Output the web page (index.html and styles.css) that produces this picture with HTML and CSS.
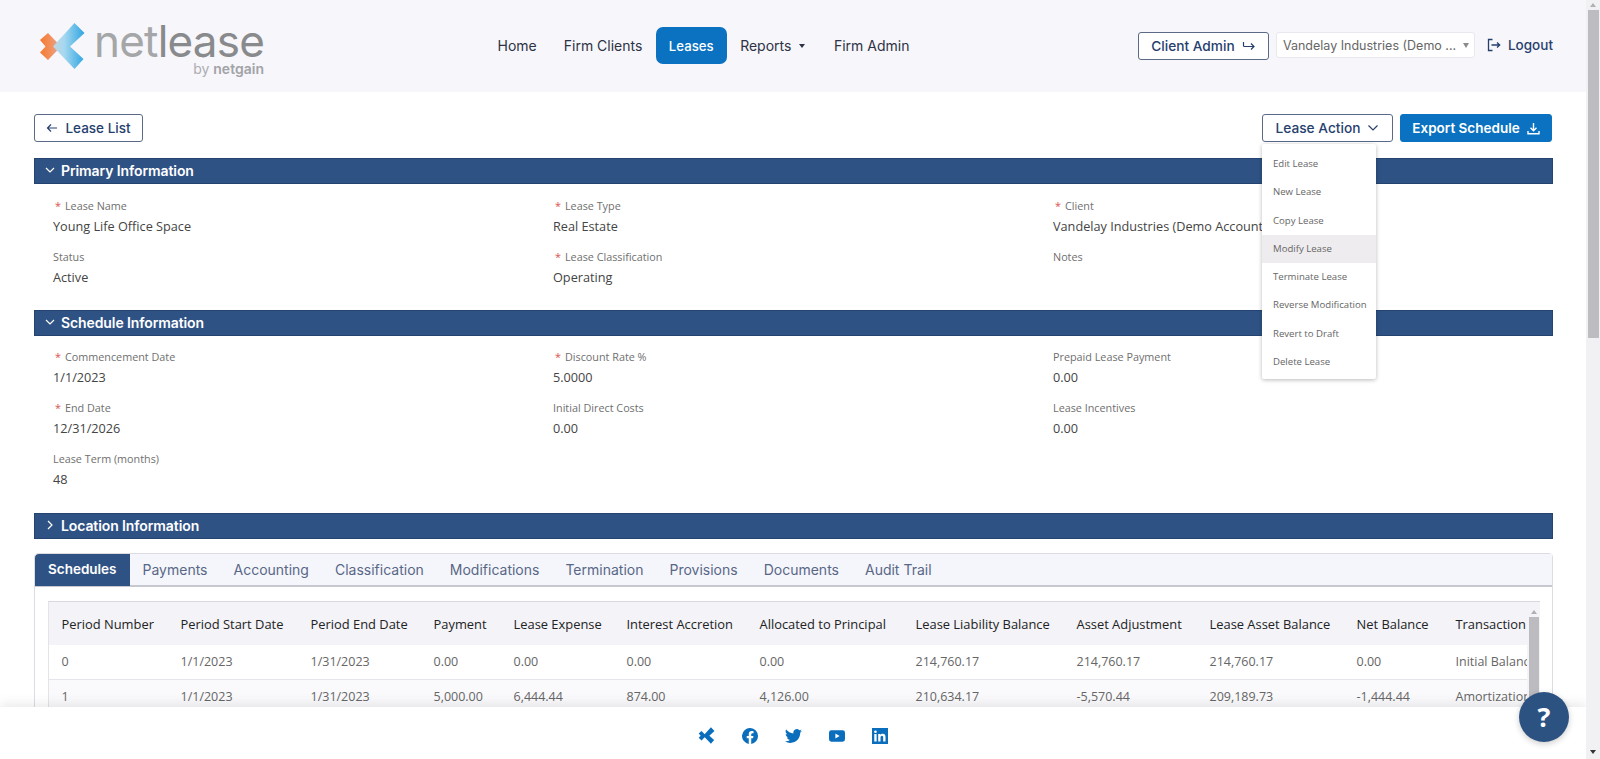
FILE: index.html
```html
<!DOCTYPE html>
<html lang="en">
<head>
<meta charset="utf-8">
<title>Netlease</title>
<link rel="stylesheet" href="styles.css">
</head>
<body>
<div class="app">
  <div class="page">
    <header class="header">
      <a class="logo">
        <svg class="logo-mark" width="46" height="48" viewBox="38 20 46 48">
          <defs>
            <linearGradient id="gb" x1="0" y1="0" x2="1" y2="0"><stop offset="0" stop-color="#c3d6e0"/><stop offset="0.35" stop-color="#a6d8f0"/><stop offset="1" stop-color="#2fa5e2"/></linearGradient>
            <linearGradient id="go" x1="0" y1="0" x2="1" y2="0"><stop offset="0" stop-color="#f47a30"/><stop offset="0.6" stop-color="#f29466"/><stop offset="1" stop-color="#b9b5b0"/></linearGradient>
          </defs>
          <polygon fill="url(#go)" points="39,38 47,31 60,44.5 47,58 39,50.5 44.5,44.5"/>
          <polygon fill="url(#gb)" points="73.5,21 83.5,31 69,44.5 82.5,57 73.5,67 52,44.5"/>
        </svg>
        <span class="logo-text">
          <span class="logo-word"><span class="logo-net">net</span>lease</span>
          <span class="logo-by">by <b>netgain</b></span>
        </span>
      </a>
      <nav class="nav">
        <a class="nav-item">Home</a>
        <a class="nav-item">Firm Clients</a>
        <a class="nav-item nav-active">Leases</a>
        <a class="nav-item nav-reports">Reports<span class="nav-caret"></span></a>
        <a class="nav-item">Firm Admin</a>
      </nav>
      <div class="header-right">
        <button class="btn btn-client">Client Admin
          <svg width="14" height="14" viewBox="0 0 14 14" fill="none" stroke="#26406e" stroke-width="1.2"><path d="M1.5 3v3.5q0 1 1 1h9.5M9 4.5l3 3-3 3"/></svg>
        </button>
        <div class="select"><span class="select-text">Vandelay Industries (Demo ...</span><span class="select-caret"></span></div>
        <a class="logout">
          <svg width="14" height="14" viewBox="0 0 14 14" fill="none" stroke="#26406e" stroke-width="1.3"><path d="M5.5 1.5h-4v11h4M4.5 7h8M10 4.5l2.7 2.5-2.7 2.5"/></svg>
          Logout
        </a>
      </div>
    </header>

    <main class="content">
      <div class="toolbar">
        <button class="btn btn-back">
          <svg width="12" height="12" viewBox="0 0 12 12" fill="none" stroke="#26406e" stroke-width="1.2"><path d="M11 6H1.5M5 2.5L1.5 6 5 9.5"/></svg>
          Lease List
        </button>
        <div class="toolbar-right">
          <div class="action-wrap">
            <button class="btn btn-action">Lease Action
              <svg width="12" height="8" viewBox="0 0 12 8" fill="none" stroke="#26406e" stroke-width="1.2"><path d="M1.5 1.5L6 6l4.5-4.5"/></svg>
            </button>
            <ul class="menu">
              <li class="menu-item">Edit Lease</li>
              <li class="menu-item">New Lease</li>
              <li class="menu-item">Copy Lease</li>
              <li class="menu-item menu-hover">Modify Lease</li>
              <li class="menu-item">Terminate Lease</li>
              <li class="menu-item">Reverse Modification</li>
              <li class="menu-item">Revert to Draft</li>
              <li class="menu-item">Delete Lease</li>
            </ul>
          </div>
          <button class="btn btn-export">Export Schedule
            <svg width="13" height="13" viewBox="0 0 13 13" fill="none" stroke="#fff" stroke-width="1.4"><path d="M6.5 1v7.5M3.5 5.8l3 3 3-3M1 9v2.8h11V9"/></svg>
          </button>
        </div>
      </div>

      <section class="section">
        <h2 class="bar"><svg class="bar-chev" width="10" height="7" viewBox="0 0 10 7" fill="none" stroke="#fff" stroke-width="1.2"><path d="M1 1l4 4 4-4"/></svg>Primary Information</h2>
        <div class="fields">
          <div class="field"><div class="label"><span class="req">*</span>Lease Name</div><div class="value">Young Life Office Space</div></div>
          <div class="field"><div class="label"><span class="req">*</span>Lease Type</div><div class="value">Real Estate</div></div>
          <div class="field"><div class="label"><span class="req">*</span>Client</div><div class="value">Vandelay Industries (Demo Account)</div></div>
          <div class="field"><div class="label">Status</div><div class="value">Active</div></div>
          <div class="field"><div class="label"><span class="req">*</span>Lease Classification</div><div class="value">Operating</div></div>
          <div class="field"><div class="label">Notes</div><div class="value"></div></div>
        </div>
      </section>

      <section class="section section-schedule">
        <h2 class="bar"><svg class="bar-chev" width="10" height="7" viewBox="0 0 10 7" fill="none" stroke="#fff" stroke-width="1.2"><path d="M1 1l4 4 4-4"/></svg>Schedule Information</h2>
        <div class="fields">
          <div class="field"><div class="label"><span class="req">*</span>Commencement Date</div><div class="value">1/1/2023</div></div>
          <div class="field"><div class="label"><span class="req">*</span>Discount Rate %</div><div class="value">5.0000</div></div>
          <div class="field"><div class="label">Prepaid Lease Payment</div><div class="value">0.00</div></div>
          <div class="field"><div class="label"><span class="req">*</span>End Date</div><div class="value">12/31/2026</div></div>
          <div class="field"><div class="label">Initial Direct Costs</div><div class="value">0.00</div></div>
          <div class="field"><div class="label">Lease Incentives</div><div class="value">0.00</div></div>
          <div class="field"><div class="label">Lease Term (months)</div><div class="value">48</div></div>
        </div>
      </section>

      <section class="section section-closed">
        <h2 class="bar"><svg class="bar-chev" width="10" height="10" viewBox="0 0 10 10" fill="none" stroke="#fff" stroke-width="1.2"><path d="M3 1l4 4-4 4"/></svg>Location Information</h2>
      </section>

      <section class="card">
        <div class="tabs">
          <a class="tab tab-active">Schedules</a>
          <a class="tab">Payments</a>
          <a class="tab">Accounting</a>
          <a class="tab">Classification</a>
          <a class="tab">Modifications</a>
          <a class="tab">Termination</a>
          <a class="tab">Provisions</a>
          <a class="tab">Documents</a>
          <a class="tab">Audit Trail</a>
        </div>
        <div class="table-box">
          <div class="table-scroll">
            <table class="table">
              <colgroup>
                <col class="c1"><col class="c2"><col class="c3"><col class="c4"><col class="c5"><col class="c6"><col class="c7"><col class="c8"><col class="c9"><col class="c10"><col class="c11"><col class="c12">
              </colgroup>
              <thead>
                <tr><th>Period Number</th><th>Period Start Date</th><th>Period End Date</th><th>Payment</th><th>Lease Expense</th><th>Interest Accretion</th><th>Allocated to Principal</th><th>Lease Liability Balance</th><th>Asset Adjustment</th><th>Lease Asset Balance</th><th>Net Balance</th><th>Transaction Type</th></tr>
              </thead>
              <tbody>
                <tr><td>0</td><td>1/1/2023</td><td>1/31/2023</td><td>0.00</td><td>0.00</td><td>0.00</td><td>0.00</td><td>214,760.17</td><td>214,760.17</td><td>214,760.17</td><td>0.00</td><td>Initial Balance</td></tr>
                <tr class="row-alt"><td>1</td><td>1/1/2023</td><td>1/31/2023</td><td>5,000.00</td><td>6,444.44</td><td>874.00</td><td>4,126.00</td><td>210,634.17</td><td>-5,570.44</td><td>209,189.73</td><td>-1,444.44</td><td>Amortization</td></tr>
              </tbody>
            </table>
          </div>
          <div class="inner-scroll"><span class="arrow-up"></span><div class="inner-thumb"></div></div>
        </div>
      </section>
    </main>

    <footer class="footer">
      <svg width="17" height="17" viewBox="38 20 46 48" fill="#0a6ebd"><polygon points="39,38 47,31 60,44.5 47,58 39,50.5 44.5,44.5"/><polygon points="73.5,21 83.5,31 69,44.5 82.5,57 73.5,67 52,44.5"/></svg>
      <svg width="16" height="16" viewBox="0 0 16 16" fill="#0a6ebd"><path d="M16 8a8 8 0 1 0-9.25 7.9v-5.6H4.7V8h2.05V6.2c0-2 1.2-3.1 3-3.1.87 0 1.78.15 1.78.15v2h-1c-1 0-1.3.6-1.3 1.25V8h2.2l-.35 2.3H9.23v5.6A8 8 0 0 0 16 8z"/></svg>
      <svg width="17" height="14" viewBox="0 0 17 14" fill="#0a6ebd"><path d="M17 1.7c-.6.3-1.3.5-2 .6.7-.4 1.3-1.1 1.5-1.9-.7.4-1.4.7-2.2.8A3.5 3.5 0 0 0 8.400 4.400 10 10 0 0 1 1.200.6a3.500 3.500 0 0 0 1.100 4.700c-.6 0-1.100-.2-1.600-.4 0 1.700 1.200 3.100 2.800 3.400-.5.1-1 .2-1.600.1.500 1.400 1.700 2.400 3.300 2.400A7 7 0 0 1 0 12.300 10 10 0 0 0 5.300 13.900c6.500 0 10.100-5.400 9.900-10.200.7-.5 1.300-1.200 1.800-2z"/></svg>
      <svg width="16" height="12" viewBox="0 0 17 12" fill="#0a6ebd"><path fill-rule="evenodd" d="M2.500 0h12A2.500 2.500 0 0 1 17 2.500v7a2.500 2.500 0 0 1-2.500 2.500h-12A2.500 2.500 0 0 1 0 9.500v-7A2.500 2.500 0 0 1 2.500 0zM6.800 3.400v5.200L11.300 6z"/></svg>
      <svg width="16" height="16" viewBox="0 0 16 16"><rect width="16" height="16" fill="#0a6ebd"/><path fill="#fff" d="M2.300 6h2.300v7.600H2.300zM3.450 2.400a1.300 1.300 0 1 1 0 2.700 1.300 1.300 0 0 1 0-2.700zM6.200 6h2.200v1c.4-.7 1.200-1.200 2.300-1.200 2.300 0 2.800 1.500 2.800 3.500v4.300h-2.300V9.800c0-.9 0-2-1.200-2s-1.500 1-1.500 2v3.800H6.200z"/></svg>
    </footer>
  </div>

  <aside class="scrollbar"><span class="arrow-up"></span><div class="scroll-thumb"></div><span class="arrow-down"></span></aside>
  <button class="help">?</button>
</div>
</body>
</html>
```

FILE: styles.css
```css
* { box-sizing: border-box; }
html, body { margin: 0; height: 100%; overflow: hidden; background: #fff; }
body { font-family: "Open Sans", "Noto Sans", sans-serif; font-size: 13px; color: #333; }
button { font: inherit; cursor: pointer; }
ul { margin: 0; padding: 0; list-style: none; }
h2 { margin: 0; }

.app { position: relative; display: flex; height: 759px; overflow: hidden; }
.page { flex: 1; min-width: 0; display: flex; flex-direction: column; }

/* Header */
.header { flex: none; height: 92px; background: #f6f6fb; display: flex; align-items: flex-start; padding: 0 33px 0 39px; font-family: Inter, "Liberation Sans", sans-serif; }
.logo { display: flex; width: 224px; margin-top: 22px; flex: none; }
.logo-mark { display: block; flex: none; }
.logo-text { display: flex; flex-direction: column; align-items: flex-end; margin-left: 9px; margin-top: -4px; }
.logo-word { font-size: 44px; line-height: 46px; letter-spacing: -0.8px; color: #898a8c; font-weight: 400; white-space: nowrap; }
.logo-net { color: #a5a6a8; }
.logo-by { margin-top: -3px; font-size: 14px; line-height: 15px; color: #adadb0; }
.logo-by b { font-weight: 600; color: #a2a3a6; }

.nav { display: flex; margin: 27px 0 0 221px; flex: none; }
.nav-item { height: 37px; display: flex; align-items: center; padding: 0 13.5px; font-size: 14px; color: #2e3244; white-space: nowrap; }
.nav-active { background: #0a72c0; color: #fff; font-size: 13.2px; font-weight: 500; border-radius: 7px; padding: 0 13px; }
.nav-caret { width: 0; height: 0; margin: 0 0 0 8px; border-left: 3px solid transparent; border-right: 3px solid transparent; border-top: 4px solid #2e3244; }
.nav-reports { padding-right: 15px; }

.header-right { margin-left: auto; display: flex; align-items: flex-start; margin-top: 32px; flex: none; }
.btn { height: 28px; display: inline-flex; align-items: center; justify-content: center; gap: 7px; background: #fff; border: 1px solid #5b6a86; border-radius: 3px; color: #26406e; font-family: Inter, "Liberation Sans", sans-serif; font-size: 13.7px; font-weight: 500; padding: 0; white-space: nowrap; }
.btn-client { width: 131px; }
.select { width: 199px; height: 26px; margin-left: 7px; background: #fff; border: 1px solid #e8e8ee; border-radius: 3px; display: flex; align-items: center; justify-content: space-between; padding: 0 5px 0 6px; font-size: 12.500px; color: #666; }
.select-text { white-space: nowrap; }
.select-caret { width: 0; height: 0; border-left: 3.500px solid transparent; border-right: 3.500px solid transparent; border-top: 5px solid #8b8b8b; }
.logout { margin-left: 12px; height: 26px; display: flex; align-items: center; gap: 7px; font-size: 13.5px; font-weight: 500; color: #26406e; }

/* Content */
.content { flex: 1; min-height: 0; overflow: hidden; padding: 22px 33px 0 34px; }
.toolbar { display: flex; justify-content: space-between; margin-bottom: 16px; }
.toolbar-right { display: flex; gap: 7px; padding-right: 1px; }
.action-wrap { position: relative; }
.btn-back { width: 109px; font-size: 13.5px; }
.btn-action { width: 131px; }
.btn-export { width: 152px; background: #0a72c0; border-color: #0a72c0; color: #fff; font-weight: 600; font-size: 13.5px; }
.menu { position: absolute; left: 0; top: 30px; z-index: 5; width: 114px; height: 235px; padding: 6px 0 0; background: #fff; border-radius: 2px; box-shadow: 0 1px 4px rgba(0,0,0,.28); }
.menu-item { height: 28.300px; line-height: 28.300px; padding-left: 11px; font-size: 9.600px; color: #666; white-space: nowrap; }
.menu-hover { background: #eeecee; }

.bar { height: 26px; display: flex; align-items: center; padding: 0 0 2px 10px; background: #2f5285; border: 1px solid #24446f; color: #fff; font-family: Inter, "Liberation Sans", sans-serif; font-size: 14px; font-weight: 600; letter-spacing: -0.1px; }
.bar-chev { margin-right: 6px; }
.section { margin-bottom: 12px; }
.section-schedule { margin-bottom: 13px; }
.section-schedule .fields { padding-top: 11px; }
.section-closed { margin-bottom: 14px; }
.fields { display: grid; grid-template-columns: repeat(3, 500px); padding: 12px 0 0 19px; }
.field { height: 51px; }
.label { height: 20px; line-height: 20px; font-size: 10.800px; color: #6f6f6f; white-space: nowrap; }
.req { color: #d9534f; margin: 0 4px 0 2px; }
.value { height: 20px; line-height: 20px; font-size: 12.700px; color: #444; white-space: nowrap; }

/* Tabs */
.card { border: 1px solid #dcdce2; border-radius: 4px 4px 0 0; padding-bottom: 20px; }
.tabs { height: 33px; display: flex; background: #f5f6fb; border-bottom: 2px solid #c8c9d0; font-family: Inter, "Liberation Sans", sans-serif; font-size: 14px; }
.tab { height: 32px; display: flex; align-items: center; padding: 0 13px 2px; color: #596787; white-space: nowrap; }
.tab-active { background: #2f5285; color: #fff; font-weight: 600; font-size: 13.500px; border-radius: 4px 0 0 0; }

.table-box { display: flex; height: 130px; margin: 14px 12px 0 13px; border-top: 1px solid #d8d8de; border-left: 1px solid #e4e4e8; }
.table-scroll { flex: 1; min-width: 0; overflow: hidden; }
.table { table-layout: fixed; border-collapse: collapse; width: 1430px; }
.c1 { width: 119px; } .c2 { width: 130px; } .c3 { width: 123px; } .c4 { width: 80px; } .c5 { width: 113px; } .c6 { width: 133px; } .c7 { width: 156px; } .c8 { width: 161px; } .c9 { width: 133px; } .c10 { width: 147px; } .c11 { width: 99px; } .c12 { width: 136px; }
.table th { height: 43px; background: #f3f3f8; text-align: left; font-weight: 400; font-size: 12.900px; color: #222; padding: 0 0 0 12.500px; white-space: nowrap; }
.table td { height: 34px; text-align: left; font-size: 12.500px; color: #666; padding: 0 0 0 12.500px; border-bottom: 1px solid #e6e6ea; white-space: nowrap; overflow: hidden; }
.row-alt td { background: #fafafc; }
.inner-scroll { flex: none; width: 13px; background: #f3f3f8; display: flex; flex-direction: column; align-items: center; padding-top: 5px; }
.inner-thumb { width: 10px; flex: 1; margin-top: 3px; background: #bcbbbf; }

/* Footer */
.footer { flex: none; height: 52px; position: relative; z-index: 3; background: #fff; box-shadow: 0 -4px 10px rgba(0,0,0,.08); display: flex; align-items: center; justify-content: center; gap: 27px; padding-top: 5px; }

/* Scrollbars */
.scrollbar { flex: none; width: 14px; background: #f1f0f3; display: flex; flex-direction: column; align-items: center; position: relative; z-index: 4; }
.scroll-thumb { width: 11px; height: 328px; margin-top: 3px; background: #bdbcc0; }
.arrow-up { flex: none; width: 0; height: 0; margin-top: 3px; border-left: 3.500px solid transparent; border-right: 3.500px solid transparent; border-bottom: 4px solid #b0b0b4; }
.arrow-down { flex: none; width: 0; height: 0; margin-top: auto; margin-bottom: 5px; border-left: 3.500px solid transparent; border-right: 3.500px solid transparent; border-top: 4px solid #333; }

.help { position: absolute; left: 1519px; top: 692px; z-index: 6; width: 50px; height: 50px; border: 0; border-radius: 50%; background: #2c5282; color: #fff; font-family: "Open Sans", sans-serif; font-size: 27px; font-weight: 700; line-height: 50px; padding: 0; box-shadow: 0 2px 6px rgba(0,0,0,.2); }
```
